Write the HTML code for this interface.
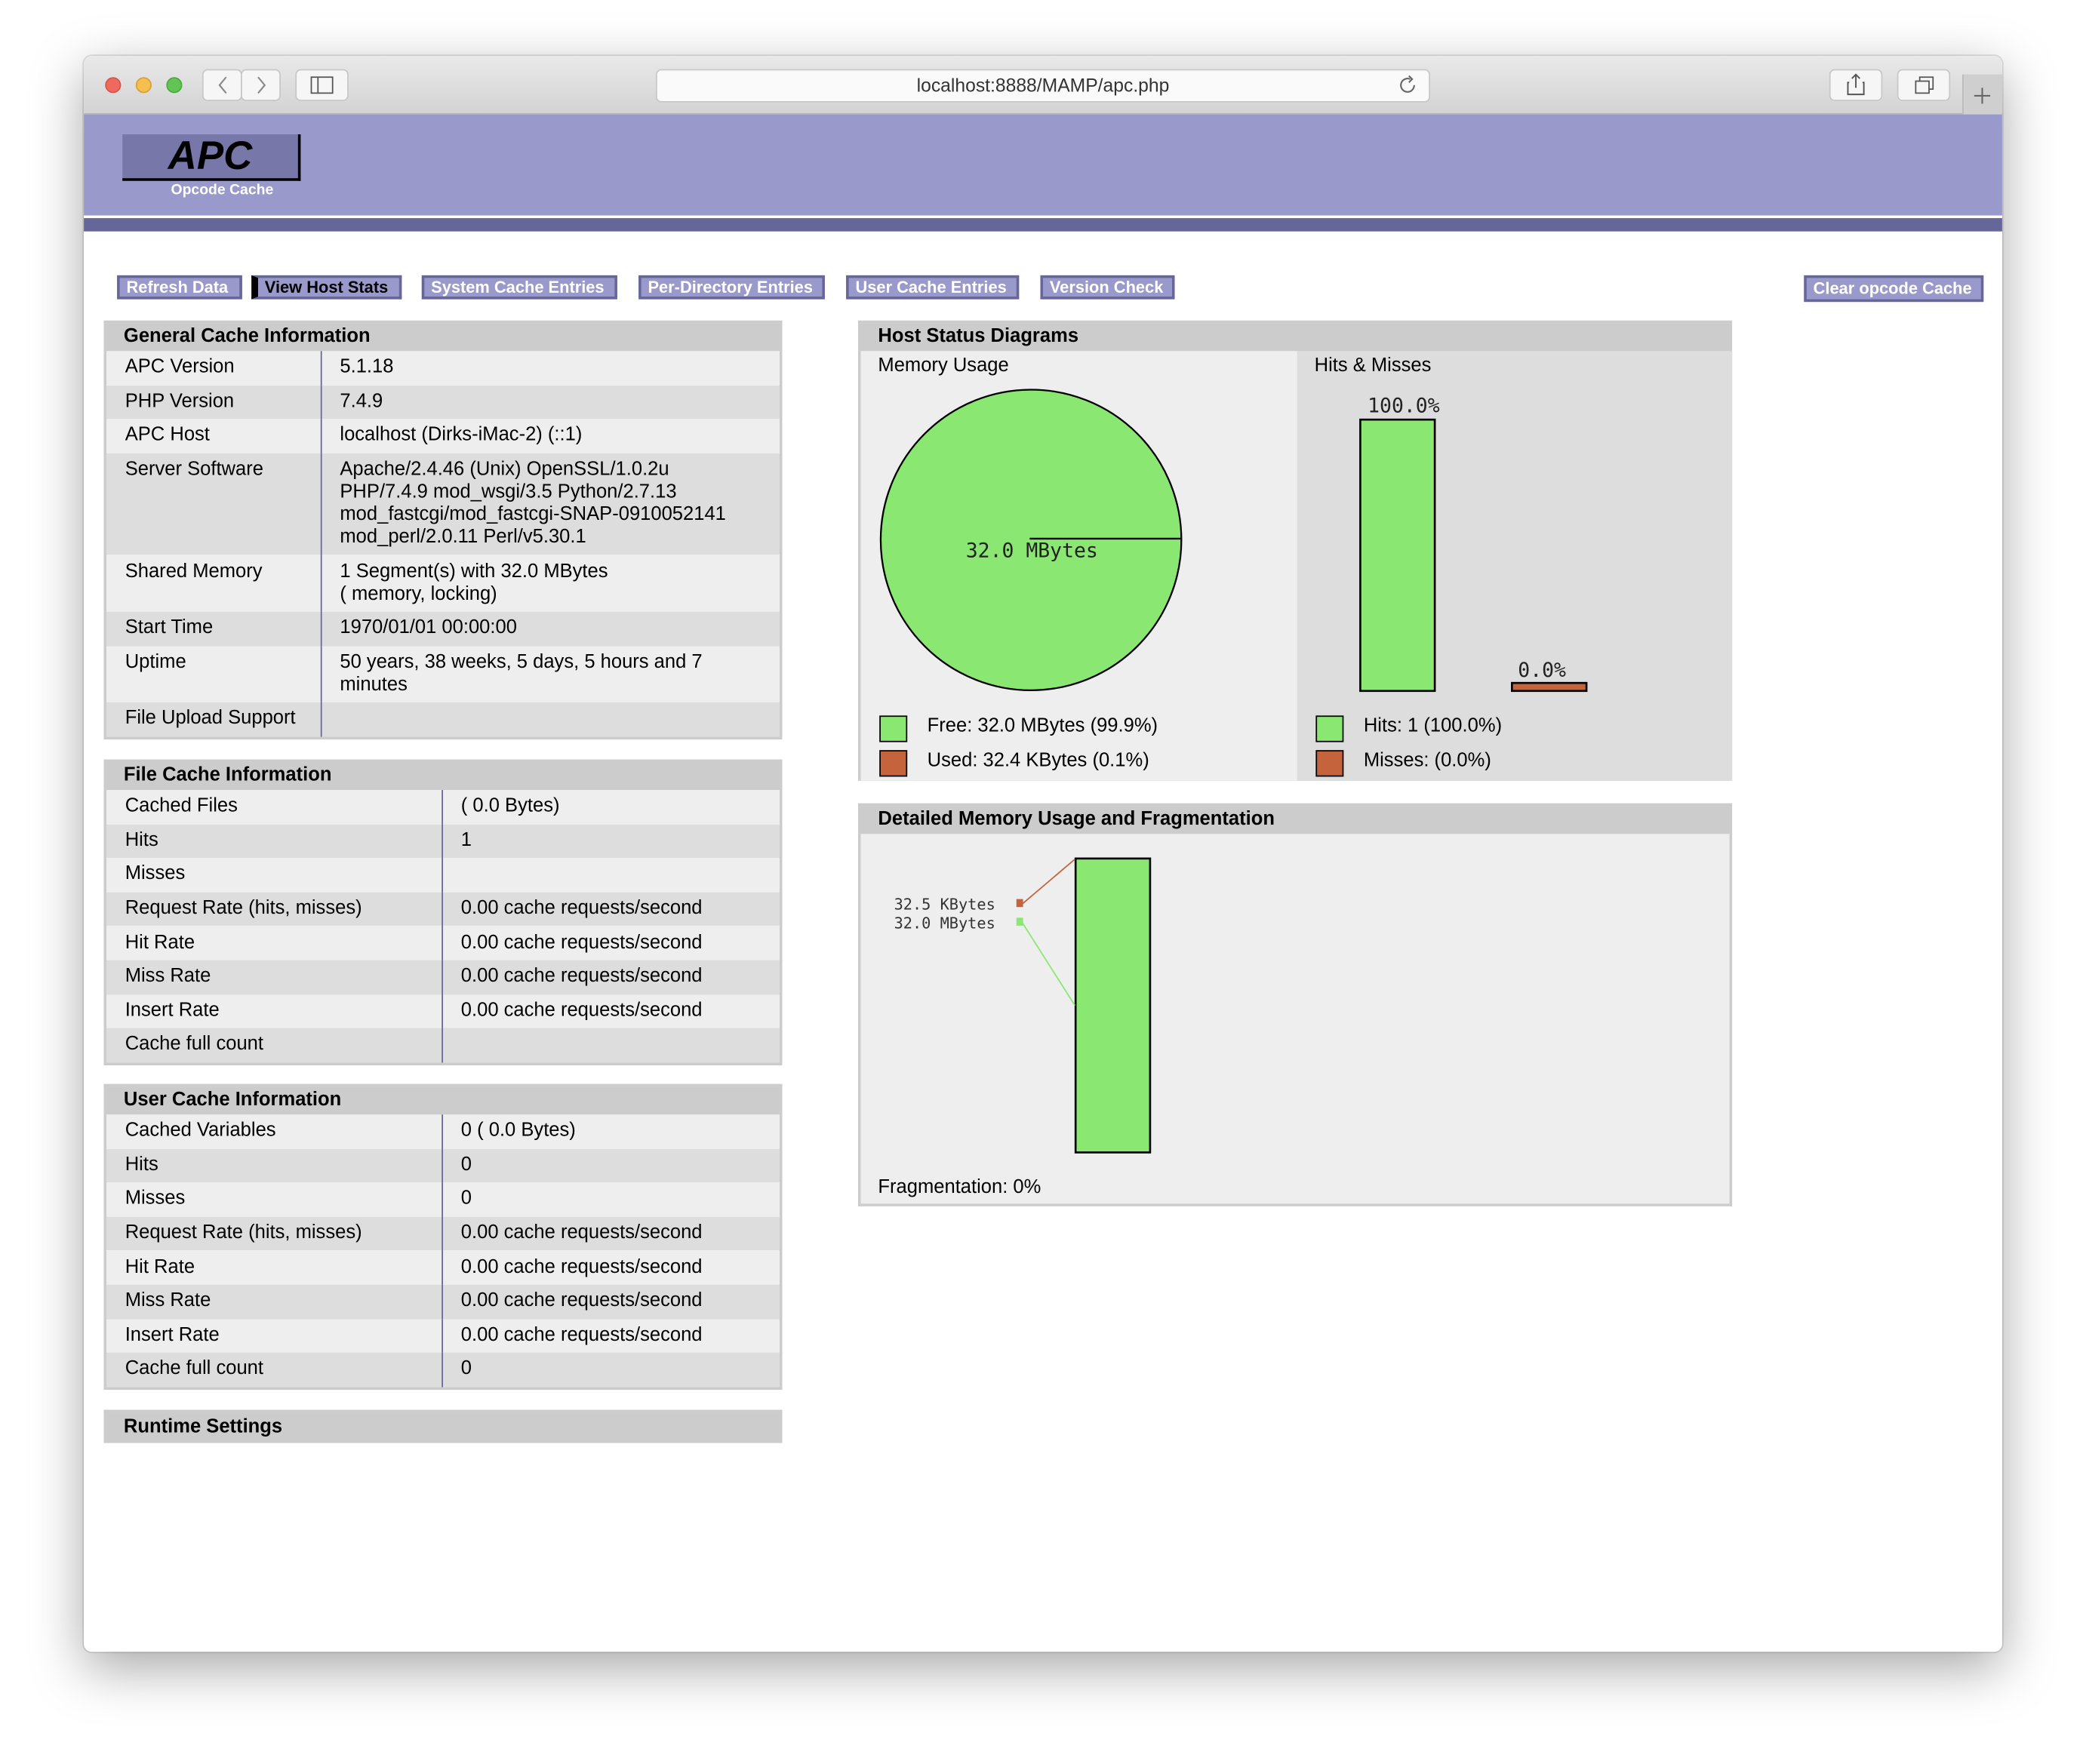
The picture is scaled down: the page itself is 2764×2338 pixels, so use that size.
<!DOCTYPE html>
<html><head><meta charset="utf-8"><style>
*{margin:0;padding:0;box-sizing:border-box}
html,body{width:2764px;height:2338px;overflow:hidden;background:#fff}
#root{position:absolute;left:0;top:0;width:1568px;height:1326px;transform:scale(1.76276);transform-origin:0 0;font-family:"Liberation Sans",Arial,sans-serif;color:#000}
.win{position:absolute;left:63px;top:42px;width:1442px;height:1200px;background:#fff;border-radius:6px;overflow:hidden;box-shadow:0 12px 40px rgba(0,0,0,.35),0 0 0 1px rgba(0,0,0,.12)}
.tb{position:absolute;left:0;top:0;width:1442px;height:44px;background:linear-gradient(#e9e9e9,#d3d3d3);border-bottom:1px solid #b5b5b5}
.dot{position:absolute;top:16px;width:12px;height:12px;border-radius:50%}
.tbtn{position:absolute;top:10px;height:24px;background:#f6f6f6;border:1px solid #c8c8c8;border-radius:4px}
.abs{position:absolute}
.hdr{position:absolute;left:0;top:44px;width:1442px;height:76px;background:#9999cc}
.bar2{position:absolute;left:0;top:122px;width:1442px;height:10px;background:#666699}
.btn{position:absolute;top:165px;height:18px;background:#9999cc;border:2px solid #666699;color:#fff;font-weight:bold;font-size:12.4px;line-height:14px;padding:0 5px;white-space:nowrap}
.box{position:absolute;background:#eee;border:2px solid #ccc}
.bh{background:#ccc;height:21px;font-weight:bold;font-size:14.5px;line-height:21px;padding-left:13px}
table{border-collapse:collapse;width:100%;font-size:14.5px}
td{padding:4.3px 0 4.3px 14px;line-height:17px;vertical-align:top;height:25.6px}
tr:nth-child(odd) td{background:#eee}
tr:nth-child(even) td{background:#ddd}
td.k{border-right:1px solid #666699}
</style></head><body><div id="root">
<div class="win">
 <div class="tb">
  <div class="dot" style="left:16px;background:#ee6a5e;border:1px solid #d5564a"></div>
  <div class="dot" style="left:39px;background:#f5bf4f;border:1px solid #d8a13b"></div>
  <div class="dot" style="left:62px;background:#61c454;border:1px solid #4ea93f"></div>
  <div class="tbtn" style="left:89px;width:30px"></div>
  <div class="tbtn" style="left:118px;width:30px"></div>
  <svg class="abs" style="left:89px;top:10px" width="60" height="24"><path d="M18 6 L13 12 L18 18" stroke="#888" fill="none" stroke-width="1.2"/><path d="M42 6 L47 12 L42 18" stroke="#888" fill="none" stroke-width="1.2"/></svg>
  <div class="tbtn" style="left:159px;width:40px"></div>
  <svg class="abs" style="left:159px;top:10px" width="40" height="24"><rect x="12" y="6" width="16" height="12" stroke="#555" fill="none"/><line x1="17" y1="6" x2="17" y2="18" stroke="#555"/></svg>
  <div class="tbtn" style="left:430px;width:582px;height:25px;background:#fafafa;text-align:center;font-size:14px;line-height:23px;color:#333">localhost:8888/MAMP/apc.php</div>
  <svg class="abs" style="left:988px;top:14px" width="16" height="16"><path d="M12 8 A5 5 0 1 1 9 3.5" stroke="#666" fill="none" stroke-width="1.2"/><path d="M8 1 L10.5 3.5 L8 6" stroke="#666" fill="none" stroke-width="1.2"/></svg>
  <div class="tbtn" style="left:1312px;width:40px"></div>
  <svg class="abs" style="left:1312px;top:10px" width="40" height="24"><path d="M15 10 H14 V19 H26 V10 H25 M20 4 V14 M17 7 L20 4 L23 7" stroke="#555" fill="none" stroke-width="1.1"/></svg>
  <div class="tbtn" style="left:1363px;width:40px"></div>
  <svg class="abs" style="left:1363px;top:10px" width="40" height="24"><rect x="14" y="9" width="10" height="9" stroke="#555" fill="none"/><path d="M17 9 V6 H27 V15 H24" stroke="#555" fill="none"/></svg>
  <div class="abs" style="left:1412px;top:14px;width:30px;height:30px;background:#cfcfcf;border-left:1px solid #bbb"></div>
  <svg class="abs" style="left:1419px;top:22px" width="16" height="16"><path d="M8 2 V14 M2 8 H14" stroke="#666" stroke-width="1.2"/></svg>
 </div>
 <div class="hdr"></div>
 <div class="abs" style="left:29px;top:59px;width:134px;height:35px;background:#7777aa;border-right:2px solid #000;border-bottom:2px solid #000;text-align:center;font-weight:bold;font-style:italic;font-size:30px;line-height:33px">APC</div>
 <div class="abs" style="left:29px;top:95px;width:150px;text-align:center;color:#fff;font-weight:bold;font-size:11px">Opcode Cache</div>
 <div class="bar2"></div>

 <div class="btn" style="left:25px;width:94px">Refresh Data</div>
 <div class="btn" style="left:126px;width:113px;color:#000;border-left:5px solid #000">View Host Stats</div>
 <div class="btn" style="left:254px;width:147px">System Cache Entries</div>
 <div class="btn" style="left:417px;width:140px">Per-Directory Entries</div>
 <div class="btn" style="left:573px;width:130px">User Cache Entries</div>
 <div class="btn" style="left:719px;width:101px">Version Check</div>
 <div class="btn" style="left:1293px;width:135px;top:165px;height:20px;line-height:16px">Clear opcode Cache</div>

 <div class="box" style="left:15px;top:199px;width:510px">
  <div class="bh">General Cache Information</div>
  <table>
   <tr><td class="k" style="width:161px">APC Version</td><td>5.1.18</td></tr>
   <tr><td class="k">PHP Version</td><td>7.4.9</td></tr>
   <tr><td class="k">APC Host</td><td>localhost (Dirks-iMac-2) (::1)</td></tr>
   <tr><td class="k">Server Software</td><td>Apache/2.4.46 (Unix) OpenSSL/1.0.2u<br>PHP/7.4.9 mod_wsgi/3.5 Python/2.7.13<br>mod_fastcgi/mod_fastcgi-SNAP-0910052141<br>mod_perl/2.0.11 Perl/v5.30.1</td></tr>
   <tr><td class="k">Shared Memory</td><td>1 Segment(s) with 32.0 MBytes<br>( memory, locking)</td></tr>
   <tr><td class="k">Start Time</td><td>1970/01/01 00:00:00</td></tr>
   <tr><td class="k">Uptime</td><td>50 years, 38 weeks, 5 days, 5 hours and 7<br>minutes</td></tr>
   <tr><td class="k">File Upload Support</td><td></td></tr>
  </table>
 </div>

 <div class="box" style="left:15px;top:529px;width:510px">
  <div class="bh">File Cache Information</div>
  <table>
   <tr><td class="k" style="width:252px">Cached Files</td><td>( 0.0 Bytes)</td></tr>
   <tr><td class="k">Hits</td><td>1</td></tr>
   <tr><td class="k">Misses</td><td></td></tr>
   <tr><td class="k">Request Rate (hits, misses)</td><td>0.00 cache requests/second</td></tr>
   <tr><td class="k">Hit Rate</td><td>0.00 cache requests/second</td></tr>
   <tr><td class="k">Miss Rate</td><td>0.00 cache requests/second</td></tr>
   <tr><td class="k">Insert Rate</td><td>0.00 cache requests/second</td></tr>
   <tr><td class="k">Cache full count</td><td></td></tr>
  </table>
 </div>

 <div class="box" style="left:15px;top:773px;width:510px">
  <div class="bh">User Cache Information</div>
  <table>
   <tr><td class="k" style="width:252px">Cached Variables</td><td>0 ( 0.0 Bytes)</td></tr>
   <tr><td class="k">Hits</td><td>0</td></tr>
   <tr><td class="k">Misses</td><td>0</td></tr>
   <tr><td class="k">Request Rate (hits, misses)</td><td>0.00 cache requests/second</td></tr>
   <tr><td class="k">Hit Rate</td><td>0.00 cache requests/second</td></tr>
   <tr><td class="k">Miss Rate</td><td>0.00 cache requests/second</td></tr>
   <tr><td class="k">Insert Rate</td><td>0.00 cache requests/second</td></tr>
   <tr><td class="k">Cache full count</td><td>0</td></tr>
  </table>
 </div>

 <div class="box" style="left:15px;top:1018px;width:510px;border-bottom:none"><div class="bh" style="height:23px;line-height:22px">Runtime Settings</div></div>

 <div class="box" style="left:582px;top:199px;width:657px;height:346px">
  <div class="bh">Host Status Diagrams</div>
  <div class="abs" style="left:0;top:21px;width:328px;height:323px;background:#eee"></div>
  <div class="abs" style="left:328px;top:21px;width:327px;height:323px;background:#ddd"></div>
  <div class="abs" style="left:13px;top:24px;font-size:14.5px">Memory Usage</div>
  <div class="abs" style="left:341px;top:24px;font-size:14.5px">Hits &amp; Misses</div>
  <svg class="abs" style="left:0;top:0" width="655" height="344">
   <ellipse cx="128" cy="163" rx="113" ry="113" fill="#8ae872" stroke="#000" stroke-width="1.3"/>
   <line x1="127" y1="162" x2="241" y2="162" stroke="#000" stroke-width="1.3"/>
   <text x="79" y="176" font-family="DejaVu Sans Mono,monospace" font-size="15" fill="#222">32.0 MBytes</text>
   <rect x="375.5" y="72.5" width="56" height="204" fill="#8ae872" stroke="#000" stroke-width="1.5"/>
   <text x="381" y="67" font-family="DejaVu Sans Mono,monospace" font-size="15" fill="#222">100.0%</text>
   <rect x="489.5" y="270.5" width="56" height="6" fill="#c5643c" stroke="#000" stroke-width="1.5"/>
   <text x="494" y="266" font-family="DejaVu Sans Mono,monospace" font-size="15" fill="#222">0.0%</text>
   <rect x="14.5" y="295.5" width="20" height="19" fill="#8ae872" stroke="#000"/>
   <rect x="14.5" y="321.5" width="20" height="19" fill="#c5643c" stroke="#000"/>
   <rect x="342.5" y="295.5" width="20" height="19" fill="#8ae872" stroke="#000"/>
   <rect x="342.5" y="321.5" width="20" height="19" fill="#c5643c" stroke="#000"/>
  </svg>
  <div class="abs" style="left:50px;top:295px;font-size:14.5px">Free: 32.0 MBytes (99.9%)</div>
  <div class="abs" style="left:50px;top:321px;font-size:14.5px">Used: 32.4 KBytes (0.1%)</div>
  <div class="abs" style="left:378px;top:295px;font-size:14.5px">Hits: 1 (100.0%)</div>
  <div class="abs" style="left:378px;top:321px;font-size:14.5px">Misses: (0.0%)</div>
 </div>

 <div class="box" style="left:582px;top:562px;width:657px;height:303px">
  <div class="bh">Detailed Memory Usage and Fragmentation</div>
  <svg class="abs" style="left:0;top:0" width="655" height="300">
   <rect x="161.5" y="39.5" width="56" height="221" fill="#8ae872" stroke="#000" stroke-width="1.5"/>
   <line x1="121" y1="74" x2="161" y2="40" stroke="#c5643c"/>
   <line x1="121" y1="87" x2="161" y2="150" stroke="#8ae872"/>
   <rect x="117" y="70" width="5" height="6" fill="#c5643c"/>
   <rect x="117" y="84" width="5" height="6" fill="#8ae872"/>
   <text x="25" y="78" font-family="DejaVu Sans Mono,monospace" font-size="11.5" fill="#333">32.5 KBytes</text>
   <text x="25" y="92" font-family="DejaVu Sans Mono,monospace" font-size="11.5" fill="#333">32.0 MBytes</text>
  </svg>
  <div class="abs" style="left:13px;top:279px;font-size:14.5px">Fragmentation: 0%</div>
 </div>
</div>
</div></body></html>
